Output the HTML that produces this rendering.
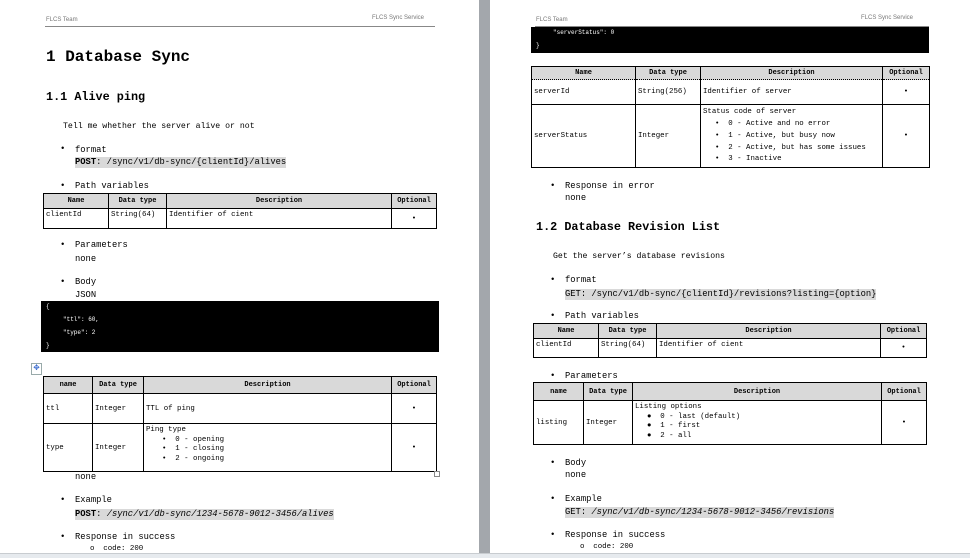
<!DOCTYPE html>
<html><head><meta charset="utf-8"><style>
*{margin:0;padding:0;box-sizing:border-box}
body{width:970px;height:558px;background:#fff;position:relative;overflow:hidden;font-family:"Liberation Mono",monospace;color:#000}
.t{position:absolute;white-space:pre;line-height:1}
.s{font-size:8.8px}
.h{font-family:"Liberation Sans",sans-serif;font-size:6px;color:#777}
.hl{position:absolute;height:1px;background:#888}
.b{position:absolute;font-size:9px}
.g{background:#d9d9d9}
.blk{position:absolute;background:#000;color:#fff;font-size:6px}
table{position:absolute;border-collapse:collapse;font-size:7.4px;table-layout:fixed}
td,th{border:1.3px solid #000;padding:0 2px;vertical-align:middle;white-space:nowrap}
th{background:#d9d9d9;font-weight:bold;font-size:7px;text-align:center}
td.c{text-align:center}
td.top{vertical-align:top;padding-top:2px;line-height:1.35}
.dt td{border-top:1px dotted #000}
.dt th{border-bottom:1px dotted #000}
.li{display:block;padding-left:16px}
.li2{display:block;padding-left:12px}
</style></head><body>
<!-- gutter -->
<div style="position:absolute;left:479px;top:0;width:11px;height:558px;background:#a3a7ac"></div>
<div style="position:absolute;left:0;top:553px;width:970px;height:5px;background:#e6eaee;border-top:1px solid #c8ccd0"></div>

<!-- LEFT PAGE -->
<div class="t h" style="left:46px;top:17px">FLCS Team</div>
<div class="t h" style="left:372px;top:15px">FLCS Sync Service</div>
<div class="hl" style="left:45px;top:26px;width:390px"></div>
<div class="t" style="left:46px;top:49px;font-size:16px;font-weight:bold">1 Database Sync</div>
<div class="t" style="left:46px;top:92px;font-size:11.8px;font-weight:bold">1.1 Alive ping</div>
<div class="t" style="left:63px;top:123px;font-size:8.2px">Tell me whether the server alive or not</div>

<div class="b" style="left:60px;top:144px">•</div>
<div class="t s" style="left:75px;top:146px">format</div>
<div class="t s g" style="left:75px;top:157px;padding:1px 0"><b>POST</b>: /sync/v1/db-sync/{clientId}/alives</div>
<div class="b" style="left:60px;top:181px">•</div>
<div class="t s" style="left:75px;top:182px">Path variables</div>
<table style="left:43px;top:193px;width:393px">
<col style="width:65px"><col style="width:58px"><col style="width:225px"><col style="width:45px">
<tr style="height:15px"><th>Name</th><th>Data type</th><th>Description</th><th>Optional</th></tr>
<tr style="height:20px"><td class="top">clientId</td><td class="top">String(64)</td><td class="top">Identifier of cient</td><td class="c">•</td></tr>
</table>
<div class="b" style="left:60px;top:240px">•</div>
<div class="t s" style="left:75px;top:241px">Parameters</div>
<div class="t s" style="left:75px;top:255px">none</div>
<div class="b" style="left:60px;top:277px">•</div>
<div class="t s" style="left:75px;top:278px">Body</div>
<div class="t s" style="left:75px;top:291px">JSON</div>
<div class="blk" style="left:41px;top:301px;width:398px;height:51px">
<div class="t" style="left:5px;top:3px">{</div>
<div class="t" style="left:22px;top:16px">"ttl": 60,</div>
<div class="t" style="left:22px;top:29px">"type": 2</div>
<div class="t" style="left:5px;top:42px">}</div>
</div>
<div style="position:absolute;left:31px;top:363px;width:11px;height:12px;border:1px solid #9aa;color:#36c;font-size:10px;line-height:10px;text-align:center">✥</div>
<table style="left:43px;top:376px;width:393px">
<col style="width:49px"><col style="width:51px"><col style="width:248px"><col style="width:45px">
<tr style="height:17px"><th>name</th><th>Data type</th><th>Description</th><th>Optional</th></tr>
<tr style="height:30px"><td>ttl</td><td>Integer</td><td>TTL of ping</td><td class="c">•</td></tr>
<tr style="height:48px"><td>type</td><td>Integer</td><td class="top" style="line-height:1.3">Ping type<span class="li">•&nbsp;&nbsp;0 - opening</span><span class="li">•&nbsp;&nbsp;1 - closing</span><span class="li">•&nbsp;&nbsp;2 - ongoing</span></td><td class="c">•</td></tr>
</table>
<div style="position:absolute;left:434px;top:471px;width:6px;height:6px;border:1px solid #888"></div>
<div class="t s" style="left:75px;top:473px">none</div>
<div class="b" style="left:60px;top:495px">•</div>
<div class="t s" style="left:75px;top:496px">Example</div>
<div class="t s g" style="left:75px;top:509px;padding:1px 0"><b>POST</b>: <i>/sync/v1/db-sync/1234-5678-9012-3456/alives</i></div>
<div class="b" style="left:60px;top:532px">•</div>
<div class="t s" style="left:75px;top:533px">Response in success</div>
<div class="t" style="left:90px;top:546px;font-size:7.4px">o  code: 200</div>

<!-- RIGHT PAGE -->
<div class="t h" style="left:536px;top:17px">FLCS Team</div>
<div class="t h" style="left:861px;top:15px">FLCS Sync Service</div>
<div class="hl" style="left:535px;top:26px;width:394px"></div>
<div class="blk" style="left:531px;top:27px;width:398px;height:26px">
<div class="t" style="left:22px;top:3px">"serverStatus": 0</div>
<div class="t" style="left:5px;top:16px">}</div>
</div>
<table class="dt" style="left:531px;top:66px;width:398px">
<col style="width:104px"><col style="width:65px"><col style="width:182px"><col style="width:47px">
<tr style="height:13px"><th>Name</th><th>Data type</th><th>Description</th><th>Optional</th></tr>
<tr style="height:25px"><td>serverId</td><td>String(256)</td><td>Identifier of server</td><td class="c">•</td></tr>
<tr style="height:63px"><td>serverStatus</td><td>Integer</td><td class="top" style="line-height:1.6">Status code of server<span class="li2">•&nbsp;&nbsp;0 - Active and no error</span><span class="li2">•&nbsp;&nbsp;1 - Active, but busy now</span><span class="li2">•&nbsp;&nbsp;2 - Active, but has some issues</span><span class="li2">•&nbsp;&nbsp;3 - Inactive</span></td><td class="c">•</td></tr>
</table>
<div class="b" style="left:550px;top:181px">•</div>
<div class="t s" style="left:565px;top:182px">Response in error</div>
<div class="t s" style="left:565px;top:194px">none</div>
<div class="t" style="left:536px;top:222px;font-size:11.8px;font-weight:bold">1.2 Database Revision List</div>
<div class="t" style="left:553px;top:253px;font-size:8.2px">Get the server’s database revisions</div>
<div class="b" style="left:550px;top:275px">•</div>
<div class="t s" style="left:565px;top:276px">format</div>
<div class="t s g" style="left:565px;top:289px;padding:1px 0">GET: /sync/v1/db-sync/{clientId}/revisions?listing={option}</div>
<div class="b" style="left:550px;top:311px">•</div>
<div class="t s" style="left:565px;top:312px">Path variables</div>
<table style="left:533px;top:323px;width:393px">
<col style="width:65px"><col style="width:58px"><col style="width:224px"><col style="width:46px">
<tr style="height:15px"><th>Name</th><th>Data type</th><th>Description</th><th>Optional</th></tr>
<tr style="height:19px"><td class="top">clientId</td><td class="top">String(64)</td><td class="top">Identifier of cient</td><td class="c">•</td></tr>
</table>
<div class="b" style="left:550px;top:371px">•</div>
<div class="t s" style="left:565px;top:372px">Parameters</div>
<table style="left:533px;top:382px;width:393px">
<col style="width:50px"><col style="width:49px"><col style="width:249px"><col style="width:45px">
<tr style="height:18px"><th>name</th><th>Data type</th><th>Description</th><th>Optional</th></tr>
<tr style="height:44px"><td>listing</td><td>Integer</td><td class="top" style="line-height:1.3">Listing options<span class="li2">●&nbsp;&nbsp;0 - last (default)</span><span class="li2">●&nbsp;&nbsp;1 - first</span><span class="li2">●&nbsp;&nbsp;2 - all</span></td><td class="c">•</td></tr>
</table>
<div class="b" style="left:550px;top:458px">•</div>
<div class="t s" style="left:565px;top:459px">Body</div>
<div class="t s" style="left:565px;top:471px">none</div>
<div class="b" style="left:550px;top:494px">•</div>
<div class="t s" style="left:565px;top:495px">Example</div>
<div class="t s g" style="left:565px;top:507px;padding:1px 0">GET: <i>/sync/v1/db-sync/1234-5678-9012-3456/revisions</i></div>
<div class="b" style="left:550px;top:530px">•</div>
<div class="t s" style="left:565px;top:531px">Response in success</div>
<div class="t" style="left:580px;top:544px;font-size:7.4px">o  code: 200</div>
</body></html>
